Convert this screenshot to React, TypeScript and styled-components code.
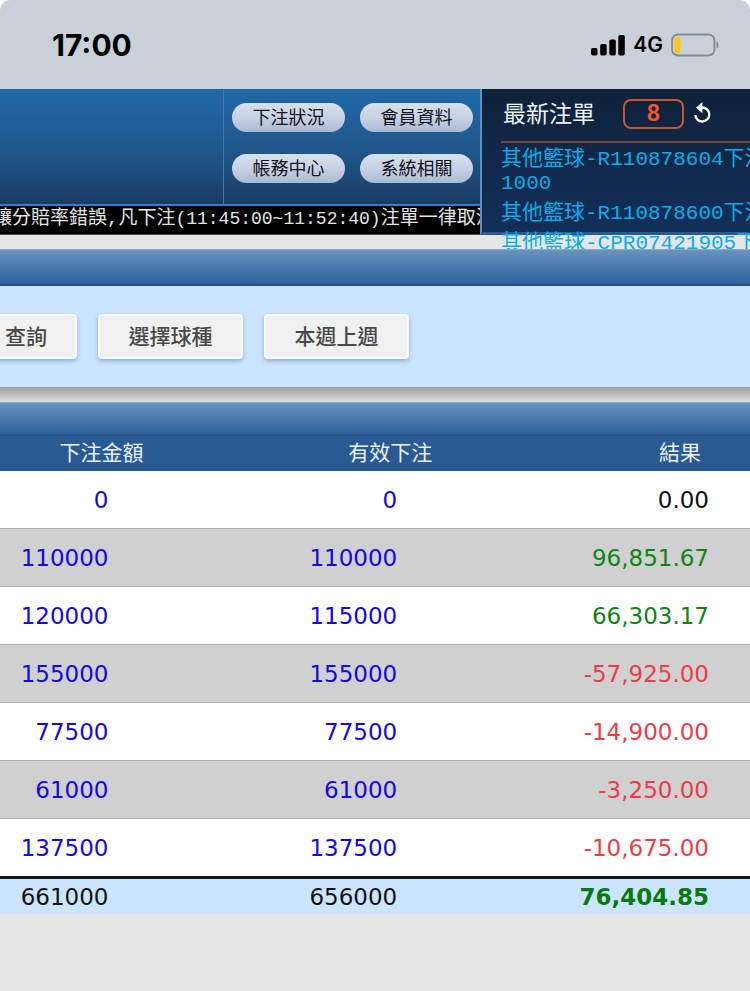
import React from "react";
import styled, { createGlobalStyle } from "styled-components";

const GlobalStyle = createGlobalStyle`
  *, *::before, *::after { box-sizing: border-box; }
  body {
    margin: 0;
    background: #e5e5e5;
    font-family: "Noto Sans CJK TC", sans-serif;
    overflow-x: hidden;
  }
  button { font-family: inherit; margin: 0; cursor: pointer; }
`;

const Page = styled.div`
  min-height: 100vh;
  overflow-x: hidden;
  background: #e5e5e5;
`;

/* Phone status bar */

const StatusBackdrop = styled.div`
  background: #ffffff;
`;

const StatusBar = styled.div`
  display: flex;
  align-items: center;
  justify-content: space-between;
  height: 89px;
  padding: 0 31px 0 52px;
  border-radius: 10px 10px 0 0;
  background: #c9d0d8;
  color: #000000;
  font-family: Inter, sans-serif;
`;

const Clock = styled.span`
  font-size: 30px;
  font-weight: 700;
`;

const StatusIcons = styled.div`
  display: flex;
  align-items: center;
  gap: 8px;
`;

const Network = styled.span`
  font-size: 21px;
  font-weight: 600;
  line-height: 24px;
`;

/* Site header */

const Header = styled.header`
  display: grid;
  grid-template-columns: minmax(0, 1fr) 270px;
  grid-template-rows: 146px;
`;

const HeaderMain = styled.div`
  display: flex;
  flex-direction: column;
  min-width: 0;
`;

const Banner = styled.div`
  flex: 1;
  display: flex;
  justify-content: flex-end;
  border-bottom: 2px solid #3a80bd;
  background: linear-gradient(#1e69a8, #20568b 55%, #1c3b65);
`;

const Menu = styled.nav`
  display: grid;
  grid-template-columns: 113px 113px;
  grid-auto-rows: 29px;
  gap: 22px 15px;
  padding: 14px 7px 0 8px;
  border-left: 1px solid #4478a8;
`;

const Pill = styled.button`
  padding: 0;
  border: 0;
  border-radius: 15px;
  background: linear-gradient(#d7e0ee, #c6d0e3 55%, #a9b8d4);
  color: #10141c;
  font-size: 18px;
  line-height: 26px;
  padding-bottom: 3px;
`;

const Ticker = styled.div`
  height: 29px;
  overflow: hidden;
  background: #000000;
  border-bottom: 1px solid #4a4a4a;
  color: #e4e4e4;
  font-family: "Liberation Mono", "Noto Sans CJK TC", monospace;
  font-size: 19px;
  line-height: 27px;
  text-indent: -7px;
  white-space: nowrap;
`;

const TickerTime = styled.span`
  font-size: 18px;
`;

const BetPanel = styled.aside`
  min-width: 0;
  overflow-x: clip;
  padding: 9px 0 0 19px;
  border-left: 2px solid #5f8fbd;
  border-bottom: 3px solid #285b96;
  background: linear-gradient(#0e2139, #13305a);
`;

const BetHead = styled.div`
  display: flex;
  align-items: center;
  height: 45px;
  padding: 0 0 12px 2px;
  border-bottom: 2px solid #77483f;
`;

const BetTitle = styled.h2`
  width: 120px;
  margin: 0;
  padding-bottom: 4px;
  color: #eef3f8;
  font-size: 23px;
  font-weight: 400;
  line-height: 28px;
`;

const BetCount = styled.output`
  width: 61px;
  height: 30px;
  border: 2px solid #c4582d;
  border-radius: 8px;
  color: #f4552f;
  font-family: "Liberation Sans", sans-serif;
  font-size: 23px;
  font-weight: 700;
  line-height: 25px;
  text-align: center;
`;

const IconButton = styled.button`
  display: flex;
  margin-left: 9px;
  padding: 0;
  border: 0;
  background: none;
  color: #ffffff;
`;

const BetList = styled.ul`
  display: flex;
  flex-direction: column;
  gap: 6px;
  margin: 0;
  padding: 5px 0 0;
  list-style: none;
  color: #08aeea;
  font-family: "Liberation Mono", "Noto Sans CJK TC", monospace;
  font-size: 21px;
  line-height: 24px;
  white-space: nowrap;
`;

const BetLine = styled.span`
  display: block;
  height: 24px;
`;

/* Content */

const SectionBar = styled.div<{ $gap: number; $height: number }>`
  position: relative;
  height: ${(p) => p.$height}px;
  margin-top: ${(p) => p.$gap}px;
  border-top: 1px solid #8ba9c6;
  border-bottom: 2px solid #24507f;
  background: linear-gradient(#6a92bd, #2c629d);
`;

const Filters = styled.div`
  display: flex;
  gap: 21px;
  padding: 28px 0 28px;
  background: #cbe5ff;
`;

const FilterButton = styled.button<{ $cut?: boolean }>`
  flex: none;
  height: 45px;
  min-width: ${(p) => (p.$cut ? 102 : 145)}px;
  margin-left: ${(p) => (p.$cut ? -25 : 0)}px;
  padding: 0 0 4px;
  border: 2px solid #f9fafb;
  border-radius: 4px;
  background: #f0f0f0;
  box-shadow: 0 2px 4px rgba(60, 80, 110, 0.4);
  color: #484848;
  font-size: 21px;
  font-weight: 500;
  line-height: 36px;
`;

const Shade = styled.div`
  height: 15px;
  background: linear-gradient(#9d9d9d, #dedede);
`;

const Report = styled.table`
  width: 100%;
  table-layout: fixed;
  border-collapse: separate;
  border-spacing: 0;
  font-family: "DejaVu Sans", Verdana, sans-serif;
  font-size: 23px;
`;

const Col = styled.col<{ $share: string }>`
  width: ${(p) => p.$share};
`;

const HeadCell = styled.th`
  padding: 0 104px 4px 0;
  background: #2a5a94;
  color: #e9f1fa;
  font-family: "Noto Sans CJK TC", sans-serif;
  font-size: 21px;
  font-weight: 400;
  line-height: 31px;
  text-align: right;
  white-space: nowrap;
  &:last-child { padding-right: 49px; }
`;

const Cell = styled.td<{ $color?: string }>`
  padding: 2px 139px 0 0;
  color: ${(p) => p.$color || "#111111"};
  text-align: right;
  white-space: nowrap;
  &:last-child { padding-right: 41px; }
`;

const Row = styled.tr`
  background: #ffffff;
  &:nth-child(even) { background: #d0d0d0; }
  ${Cell} {
    border-bottom: 1px solid #b0b0b0;
    line-height: 55px;
  }
  &:last-child ${Cell} { border-bottom: 0; }
`;

const TotalRow = styled.tr`
  background: #cbe5ff;
  ${Cell} {
    border-top: 3px solid #15191e;
    line-height: 33px;
  }
`;

const Amount = styled.a`
  color: #1408e4;
  text-decoration: none;
`;

const Strong = styled.strong`
  color: #077a0c;
  font-weight: 700;
`;

const SignalIcon = () => (
  <svg width="34" height="22" viewBox="0 0 34 22" fill="currentColor" aria-hidden="true">
    <rect x="0" y="14" width="6.5" height="7.5" rx="1.8" />
    <rect x="9.2" y="10" width="6.5" height="11.5" rx="1.8" />
    <rect x="18.3" y="5.5" width="6.5" height="16" rx="1.8" />
    <rect x="27.3" y="1" width="6.5" height="20.5" rx="1.8" />
  </svg>
);

const BatteryIcon = () => (
  <svg width="48" height="24" viewBox="0 0 48 24" aria-hidden="true">
    <rect x="1" y="1.5" width="42.5" height="21" rx="6" fill="none" stroke="#858a92" strokeWidth="1.8" />
    <rect x="3.6" y="4" width="5.8" height="16" rx="2.4" fill="#fdc90b" />
    <path d="M45.5 8.5c2.6 1 2.6 6 0 7z" fill="#858a92" />
  </svg>
);

const ReloadIcon = () => (
  <svg width="20" height="24" viewBox="0 0 20 24" fill="none" aria-hidden="true">
    <path d="M8 5.5h1.5a7 7 0 1 1-7.2 7.6" stroke="currentColor" strokeWidth="2.3" />
    <path d="M3 5.7 9.4 0v11.3z" fill="currentColor" />
  </svg>
);

const menuItems = ["下注狀況", "會員資料", "帳務中心", "系統相關"];

const bets = [
  ["其他籃球-R110878604下注", "1000"],
  ["其他籃球-R110878600下注"],
  ["其他籃球-CPR07421905下注"],
];

const rows = [
  ["0", "0", "0.00"],
  ["110000", "110000", "96,851.67"],
  ["120000", "115000", "66,303.17"],
  ["155000", "155000", "-57,925.00"],
  ["77500", "77500", "-14,900.00"],
  ["61000", "61000", "-3,250.00"],
  ["137500", "137500", "-10,675.00"],
];

const resultColor = (value: string) => {
  if (value.startsWith("-")) return "#ec3c4a";
  return value === "0.00" ? "#111111" : "#118414";
};

export default function App() {
  return (
    <Page>
      <GlobalStyle />
      <StatusBackdrop>
        <StatusBar>
          <Clock>17:00</Clock>
          <StatusIcons>
            <SignalIcon />
            <Network>4G</Network>
            <BatteryIcon />
          </StatusIcons>
        </StatusBar>
      </StatusBackdrop>

      <Header>
        <HeaderMain>
          <Banner>
            <Menu>
              {menuItems.map((label) => (
                <Pill key={label} type="button">{label}</Pill>
              ))}
            </Menu>
          </Banner>
          <Ticker>
            讓分賠率錯誤,凡下注<TickerTime>(11:45:00~11:52:40)</TickerTime>注單一律取消
          </Ticker>
        </HeaderMain>
        <BetPanel>
          <BetHead>
            <BetTitle>最新注單</BetTitle>
            <BetCount>8</BetCount>
            <IconButton type="button" aria-label="重新整理">
              <ReloadIcon />
            </IconButton>
          </BetHead>
          <BetList>
            {bets.map((lines) => (
              <li key={lines[0]}>
                {lines.map((line) => (
                  <BetLine key={line}>{line}</BetLine>
                ))}
              </li>
            ))}
          </BetList>
        </BetPanel>
      </Header>

      <main>
        <SectionBar $gap={14} $height={37} />
        <Filters>
          <FilterButton type="button" $cut>查詢</FilterButton>
          <FilterButton type="button">選擇球種</FilterButton>
          <FilterButton type="button">本週上週</FilterButton>
        </Filters>
        <Shade />
        <SectionBar $gap={0} $height={34} />
        <Report>
          <colgroup>
            <Col $share="33%" />
            <Col $share="38.5%" />
            <Col $share="28.5%" />
          </colgroup>
          <thead>
            <tr>
              <HeadCell scope="col">下注金額</HeadCell>
              <HeadCell scope="col">有效下注</HeadCell>
              <HeadCell scope="col">結果</HeadCell>
            </tr>
          </thead>
          <tbody>
            {rows.map(([stake, valid, result], i) => (
              <Row key={i}>
                <Cell><Amount href="#">{stake}</Amount></Cell>
                <Cell><Amount href="#">{valid}</Amount></Cell>
                <Cell $color={resultColor(result)}>{result}</Cell>
              </Row>
            ))}
          </tbody>
          <tfoot>
            <TotalRow>
              <Cell>661000</Cell>
              <Cell>656000</Cell>
              <Cell><Strong>76,404.85</Strong></Cell>
            </TotalRow>
          </tfoot>
        </Report>
      </main>
    </Page>
  );
}
